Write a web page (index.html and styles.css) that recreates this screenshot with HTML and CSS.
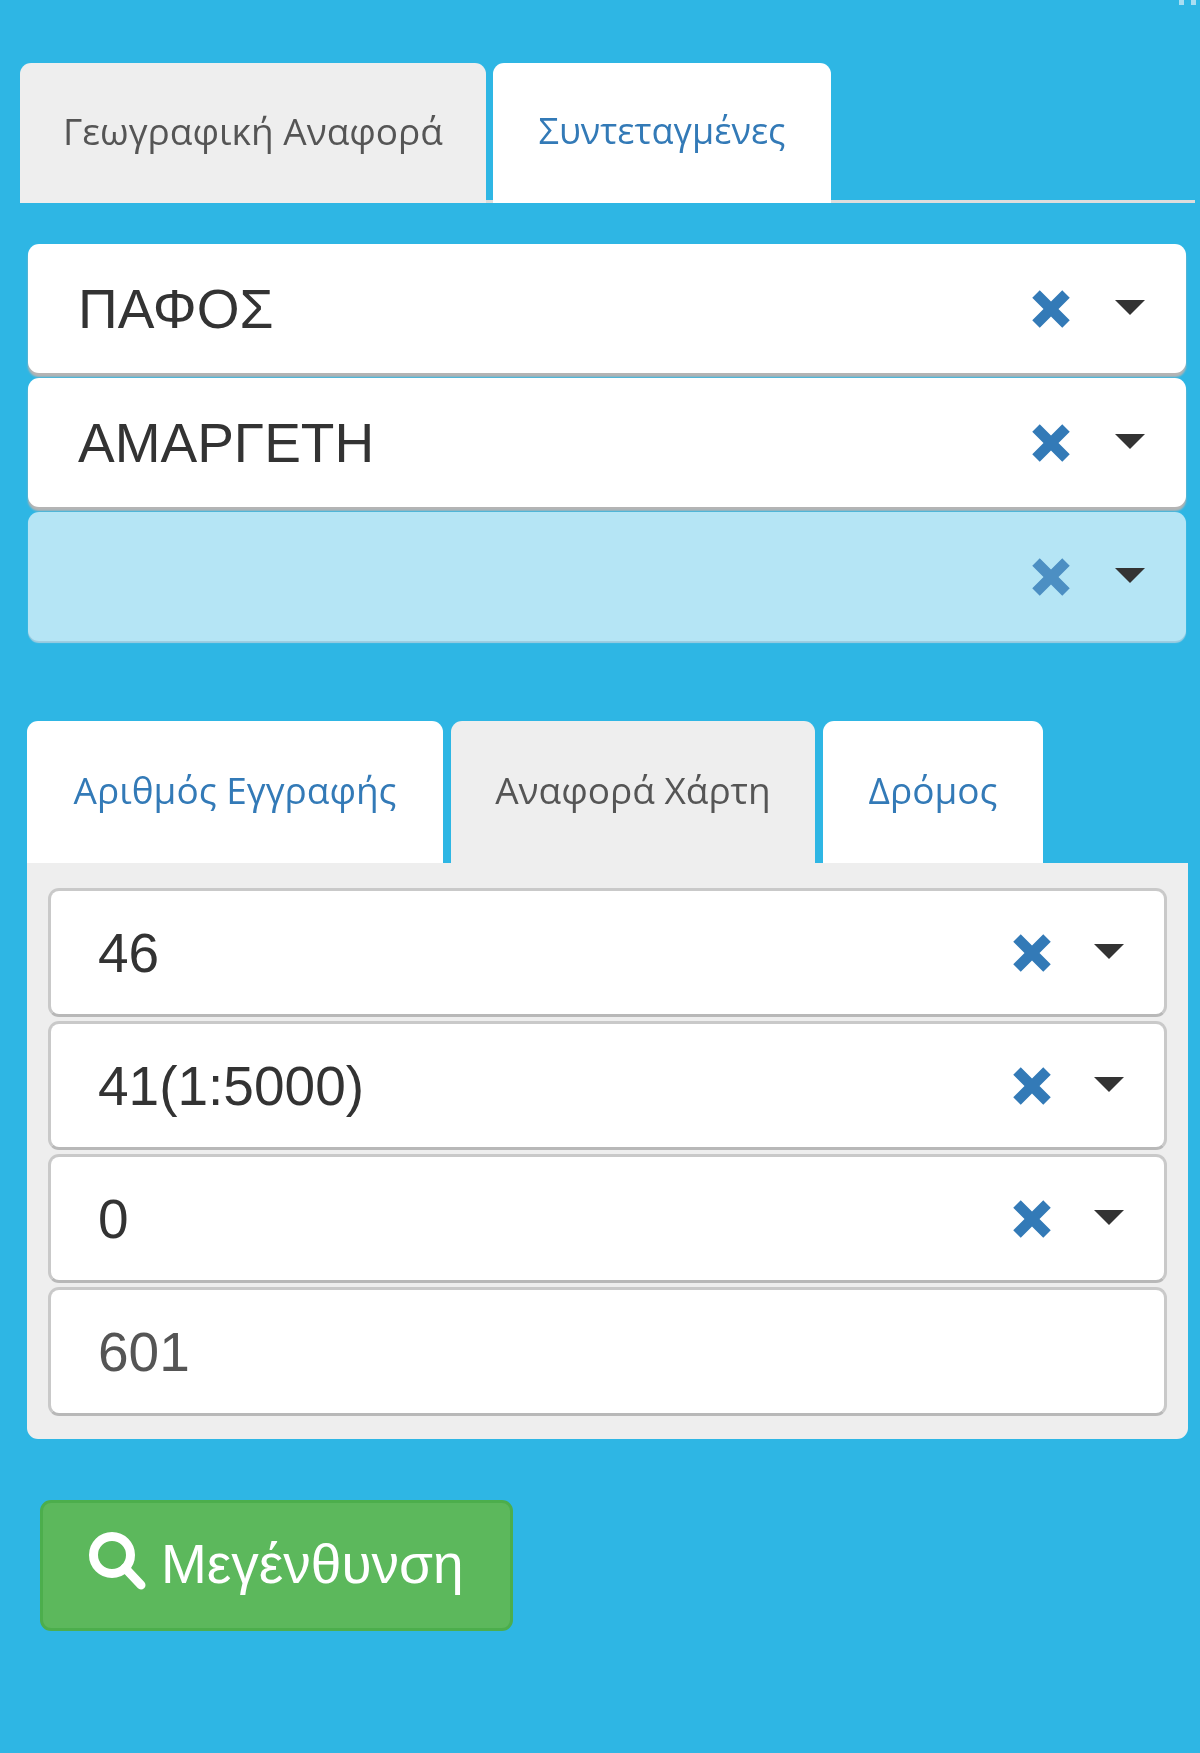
FILE: index.html
```html
<!DOCTYPE html>
<html lang="el">
<head>
<meta charset="utf-8">
<title>Μεγένθυνση</title>
<link rel="stylesheet" href="styles.css">
</head>
<body>
<div class="dots"><i></i><i></i></div>
<nav class="tabs top-tabs">
  <a class="tab tab-geo muted">Γεωγραφική Αναφορά</a>
  <a class="tab tab-coord">Συντεταγμένες</a>
</nav>
<section class="stack top-stack">
  <div class="field"><span class="value caps">ΠΑΦΟΣ</span><svg class="x" viewBox="0 0 40 40"><path d="M5 11 11 5l9 9 9-9 6 6-9 9 9 9-6 6-9-9-9 9-6-6 9-9z"/></svg><span class="caret"></span></div>
  <div class="field"><span class="value caps">ΑΜΑΡΓΕΤΗ</span><svg class="x" viewBox="0 0 40 40"><path d="M5 11 11 5l9 9 9-9 6 6-9 9 9 9-6 6-9-9-9 9-6-6 9-9z"/></svg><span class="caret"></span></div>
  <div class="field disabled"><span class="value"></span><svg class="x" viewBox="0 0 40 40"><path d="M5 11 11 5l9 9 9-9 6 6-9 9 9 9-6 6-9-9-9 9-6-6 9-9z"/></svg><span class="caret"></span></div>
</section>
<nav class="tabs sub-tabs">
  <a class="tab tab-num">Αριθμός Εγγραφής</a>
  <a class="tab tab-map muted">Αναφορά Χάρτη</a>
  <a class="tab tab-road">Δρόμος</a>
</nav>
<section class="panel">
  <div class="field inner"><span class="value">46</span><svg class="x" viewBox="0 0 40 40"><path d="M5 11 11 5l9 9 9-9 6 6-9 9 9 9-6 6-9-9-9 9-6-6 9-9z"/></svg><span class="caret"></span></div>
  <div class="field inner"><span class="value">41(1:5000)</span><svg class="x" viewBox="0 0 40 40"><path d="M5 11 11 5l9 9 9-9 6 6-9 9 9 9-6 6-9-9-9 9-6-6 9-9z"/></svg><span class="caret"></span></div>
  <div class="field inner"><span class="value">0</span><svg class="x" viewBox="0 0 40 40"><path d="M5 11 11 5l9 9 9-9 6 6-9 9 9 9-6 6-9-9-9 9-6-6 9-9z"/></svg><span class="caret"></span></div>
  <div class="field inner"><span class="value plain">601</span></div>
</section>
<button class="zoom-btn" type="button"><svg class="search" viewBox="0 0 60 60"><circle cx="24" cy="24" r="18.5"/><path d="M37 37 53 54"/></svg><span>Μεγένθυνση</span></button>
</body>
</html>
```
FILE: styles.css
```css
* { box-sizing: border-box; }
html, body { margin: 0; }
body {
  position: relative;
  width: 1200px;
  height: 1753px;
  overflow: hidden;
  padding: 63px 5px 0 20px;
  background: #2eb6e4;
  font-family: "Liberation Sans", Arial, sans-serif;
  color: #333;
}
.dots { position: absolute; top: 0; right: 4px; display: flex; gap: 7px; }
.dots i { width: 5px; height: 5px; background: #a9def2; }
.tabs, .stack, .panel, .zoom-btn { filter: blur(.6px); }
.tabs { display: flex; gap: 8px; }
.tab {
  display: flex;
  align-items: center;
  justify-content: center;
  background: #fff;
  color: #337ab7;
  border-radius: 11px 11px 0 0;
  font-family: "Open Sans", sans-serif;
  font-size: 37px;
}
.tab.muted { background: #eee; color: #555; }
.top-tabs { height: 140px; gap: 7px; border-bottom: 3px solid #ddd; }
.top-tabs .tab { height: 140px; padding-bottom: 6px; }
.tab-geo { width: 466px; }
.tab-coord { width: 338px; font-size: 36px; }
.stack { display: flex; flex-direction: column; gap: 5px; margin: 41px 9px 0 8px; }
.field {
  display: flex;
  align-items: center;
  height: 129px;
  padding: 0 41px 0 50px;
  background: #fff;
  border-radius: 11px;
  box-shadow: 0 4px 2px #b4b4b4;
  font-size: 55px;
  color: #333;
}
.value { flex: 1; }
.disabled { background: #b5e5f5; box-shadow: 0 2px 1px #9fcde0; }
.disabled .x { opacity: .8; }
.x { width: 50px; height: 50px; margin-right: 39px; fill: #337ab7; }
.caret {
  width: 0;
  height: 0;
  margin-top: -2px;
  border-left: 15px solid transparent;
  border-right: 15px solid transparent;
  border-top: 15px solid #333;
}
.sub-tabs { margin: 80px 0 0 7px; height: 142px; }
.sub-tabs .tab { padding-bottom: 6px; }
.tab-num { width: 416px; }
.tab-map { width: 364px; }
.tab-road { width: 220px; }
.panel {
  display: flex;
  flex-direction: column;
  gap: 4px;
  width: 1161px;
  margin-left: 7px;
  padding: 25px 21px 23px;
  background: #eee;
  border-radius: 0 0 11px 11px;
}
.inner { border: 3px solid #c9c9c9; border-bottom-color: #b8b8b8; box-shadow: none; padding-left: 47px; padding-right: 40px; }
.inner .x { margin-right: 37px; }
.plain { color: #555; }
.zoom-btn {
  display: flex;
  align-items: center;
  gap: 13px;
  width: 473px;
  height: 131px;
  margin: 61px 0 0 20px;
  padding: 0 0 4px 45px;
  background: #5cb85c;
  border: 3px solid #4cae4c;
  border-radius: 11px;
  color: #fff;
  font-family: "Liberation Sans", Arial, sans-serif;
  font-size: 55px;
}
.search { width: 60px; height: 60px; margin-top: -6px; fill: none; stroke: #fff; stroke-width: 9; stroke-linecap: round; }
```
